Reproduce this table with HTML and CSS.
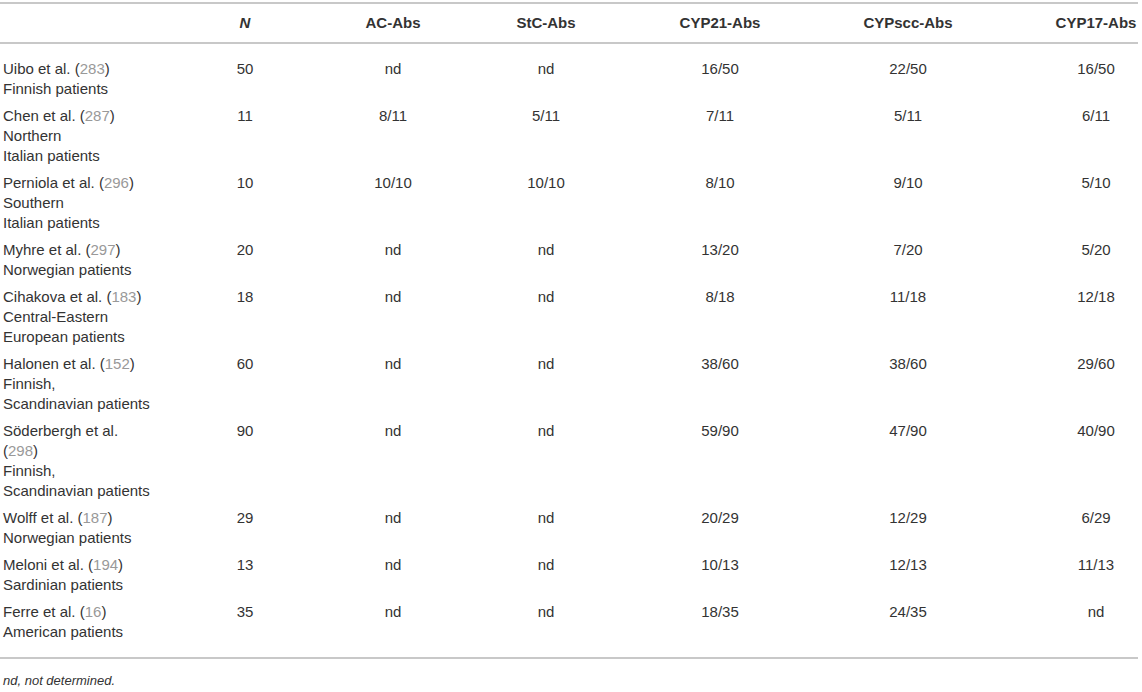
FILE: index.html
```html
<!DOCTYPE html>
<html lang="en">
<head>
  <meta charset="UTF-8">
  <title>Autoantibodies in APS-1 patients</title>
  <link rel="stylesheet" href="styles.css">
</head>
<body>
  <div class="table-wrap">
    <table class="data-table">
      <colgroup>
        <col class="c-study">
        <col class="c-n">
        <col class="c-ac">
        <col class="c-stc">
        <col class="c-21">
        <col class="c-scc">
        <col class="c-17">
      </colgroup>
      <thead>
        <tr>
          <th class="study"></th>
          <th><em>N</em></th>
          <th>AC-Abs</th>
          <th>StC-Abs</th>
          <th>CYP21-Abs</th>
          <th class="scc">CYPscc-Abs</th>
          <th>CYP17-Abs</th>
        </tr>
      </thead>
      <tbody>
        <tr>
          <td class="study">Uibo et al. (<a class="ref">283</a>)<br>Finnish patients</td>
          <td>50</td><td>nd</td><td>nd</td><td>16/50</td><td class="scc">22/50</td><td>16/50</td>
        </tr>
        <tr>
          <td class="study">Chen et al. (<a class="ref">287</a>)<br>Northern<br>Italian patients</td>
          <td>11</td><td>8/11</td><td>5/11</td><td>7/11</td><td class="scc">5/11</td><td>6/11</td>
        </tr>
        <tr>
          <td class="study">Perniola et al. (<a class="ref">296</a>)<br>Southern<br>Italian patients</td>
          <td>10</td><td>10/10</td><td>10/10</td><td>8/10</td><td class="scc">9/10</td><td>5/10</td>
        </tr>
        <tr>
          <td class="study">Myhre et al. (<a class="ref">297</a>)<br>Norwegian patients</td>
          <td>20</td><td>nd</td><td>nd</td><td>13/20</td><td class="scc">7/20</td><td>5/20</td>
        </tr>
        <tr>
          <td class="study">Cihakova et al. (<a class="ref">183</a>)<br>Central-Eastern<br>European patients</td>
          <td>18</td><td>nd</td><td>nd</td><td>8/18</td><td class="scc">11/18</td><td>12/18</td>
        </tr>
        <tr>
          <td class="study">Halonen et al. (<a class="ref">152</a>)<br>Finnish,<br>Scandinavian patients</td>
          <td>60</td><td>nd</td><td>nd</td><td>38/60</td><td class="scc">38/60</td><td>29/60</td>
        </tr>
        <tr>
          <td class="study">Söderbergh et al.<br>(<a class="ref">298</a>)<br>Finnish,<br>Scandinavian patients</td>
          <td>90</td><td>nd</td><td>nd</td><td>59/90</td><td class="scc">47/90</td><td>40/90</td>
        </tr>
        <tr>
          <td class="study">Wolff et al. (<a class="ref">187</a>)<br>Norwegian patients</td>
          <td>29</td><td>nd</td><td>nd</td><td>20/29</td><td class="scc">12/29</td><td>6/29</td>
        </tr>
        <tr>
          <td class="study">Meloni et al. (<a class="ref">194</a>)<br>Sardinian patients</td>
          <td>13</td><td>nd</td><td>nd</td><td>10/13</td><td class="scc">12/13</td><td>11/13</td>
        </tr>
        <tr>
          <td class="study">Ferre et al. (<a class="ref">16</a>)<br>American patients</td>
          <td>35</td><td>nd</td><td>nd</td><td>18/35</td><td class="scc">24/35</td><td>nd</td>
        </tr>
      </tbody>
    </table>
    <p class="footnote">nd, not determined.</p>
  </div>
</body>
</html>
```

FILE: styles.css
```css
body {
  margin: 0;
  padding: 2px 0 0;
  background: #fff;
  font-family: "Liberation Sans", Arial, sans-serif;
  font-size: 15px;
  color: #333;
}
.table-wrap {
  width: 1138px;
}
.data-table {
  width: 1138px;
  table-layout: fixed;
  border-collapse: separate;
  border-spacing: 0;
}
.c-study { width: 170px; }
.c-n { width: 150px; }
.c-ac { width: 146px; }
.c-stc { width: 160px; }
.c-21 { width: 188px; }
.c-scc { width: 240px; }
.c-17 { width: 84px; }

.data-table th,
.data-table td {
  text-align: center;
  vertical-align: top;
  line-height: 20px;
  padding: 4px 0 3px;
}
.data-table th {
  font-weight: bold;
  padding: 9px 0;
  border-top: 2px solid #c8c8c8;
  border-bottom: 2px solid #c8c8c8;
}
.data-table th em {
  font-style: italic;
}
.data-table .study {
  text-align: left;
  padding-left: 3px;
  padding-right: 17px;
}
.data-table .scc {
  padding-right: 52px;
}
.data-table tbody tr:first-child td {
  padding-top: 15px;
}
.data-table tbody tr:last-child td {
  padding-bottom: 15px;
  border-bottom: 2px solid #c8c8c8;
}
.ref {
  color: #999;
}
.footnote {
  margin: 13px 0 0 3px;
  font-size: 13px;
  line-height: 18px;
  font-style: italic;
}
```
